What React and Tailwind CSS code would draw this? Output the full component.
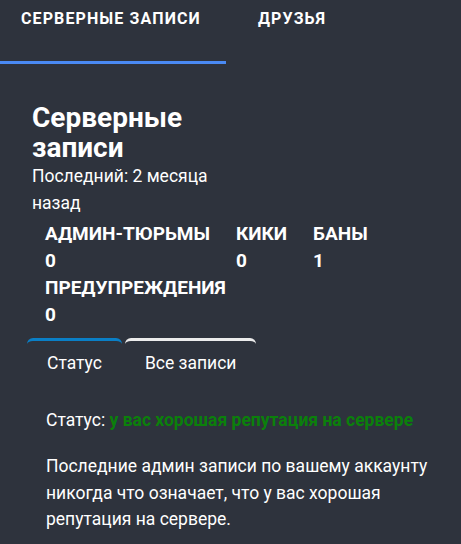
import { useState } from "react";

const STATS = [
  { label: "Админ-тюрьмы", value: 0 },
  { label: "Кики", value: 0 },
  { label: "Баны", value: 1 },
  { label: "Предупреждения", value: 0 },
];

export default function App() {
  const [topTab, setTopTab] = useState("records");
  const [tab, setTab] = useState("status");

  return (
    <div className="min-h-screen bg-[#2e333d] text-white font-['Roboto','Liberation_Sans',sans-serif]">
      {/* ── Top tabs ── */}
      <div className="flex h-16">
        <div
          className={`w-[226px] pl-[21px] pt-[9px] text-[16px] leading-5 tracking-[1.1px] font-bold uppercase border-b-[3px] cursor-pointer ${
            topTab === "records" ? "border-[#4a8af4]" : "border-transparent"
          }`}
          onClick={() => setTopTab("records")}
        >
          Серверные записи
        </div>
        <div
          className={`pl-8 pr-8 pt-[9px] text-[16px] leading-5 tracking-[1.1px] font-bold uppercase border-b-[3px] cursor-pointer ${
            topTab === "friends" ? "border-[#4a8af4]" : "border-transparent"
          }`}
          onClick={() => setTopTab("friends")}
        >
          Друзья
        </div>
      </div>

      {/* ── Content ── */}
      <div className="pl-8 pr-6 pt-[39px] pb-4">
        <div className="w-[190px]">
          <h2 className="text-[28px] leading-[30px] font-bold">Серверные записи</h2>
          <p className="text-[17.5px] leading-[27px]">Последний: 2 месяца назад</p>
        </div>

        <div className="flex flex-wrap mt-[3px]">
          {STATS.map(({ label, value }) => (
            <div key={label} className="mx-[13px] text-[19px] leading-[27px] font-bold">
              <div className="uppercase">{label}</div>
              <div>{value}</div>
            </div>
          ))}
        </div>

        {/* ── Sub tabs ── */}
        <div className="flex gap-[3px] -ml-[5px] mt-[10px]">
          {[
            { id: "status", label: "Статус", color: "border-[#0a7fc6]" },
            { id: "all", label: "Все записи", color: "border-[#ececec]" },
          ].map(({ id, label, color }) => (
            <button
              key={id}
              className={`px-5 pt-[10px] text-[17.5px] leading-6 border-t-[3px] rounded-t-md ${color}`}
              onClick={() => setTab(id)}
            >
              {label}
            </button>
          ))}
        </div>

        {tab === "status" && (
          <div className="pl-[14px] pt-[32px] text-[17.5px]">
            <p className="leading-[26px]">
              Статус:{" "}
              <span className="font-bold text-[#0b800b]">
                у вас хорошая репутация на сервере
              </span>
            </p>
            <p className="mt-[20px] leading-[26.5px]">
              Последние админ записи по вашему аккаунту никогда что означает, что у вас хорошая
              репутация на сервере.
            </p>
          </div>
        )}
      </div>
    </div>
  );
}
